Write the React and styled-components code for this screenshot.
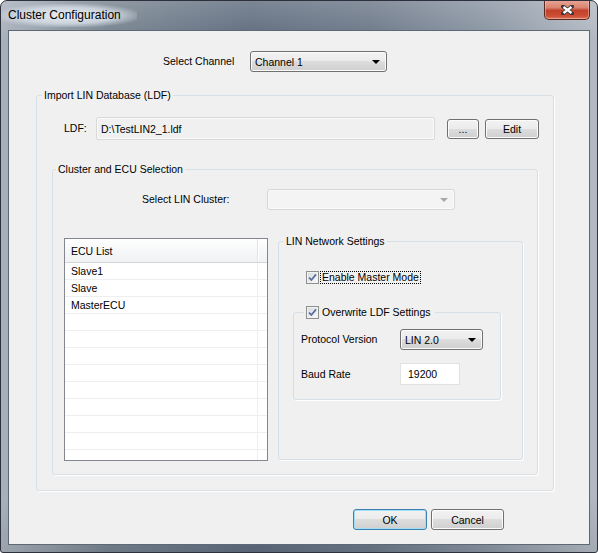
import React from "react";
import styled, { createGlobalStyle } from "styled-components";

const GlobalStyle = createGlobalStyle`
  html, body {
    margin: 0;
    padding: 0;
    background: #ffffff;
  }
  body {
    font-family: "Liberation Sans", Arial, sans-serif;
    font-size: 10.5px;
    color: #000;
  }
`;

const ecuNodes = ["Slave1", "Slave", "MasterECU"];
const emptyRows = 9;

const Window = styled.div`
  width: 598px;
  height: 553px;
  box-sizing: border-box;
  display: flex;
  flex-direction: column;
  padding: 0 7px 7px;
  border: 1px solid #2c313b;
  border-radius: 7px 7px 3px 3px;
  overflow: hidden;
  background: linear-gradient(
      180deg,
      rgba(255, 255, 255, 0.18) 0%,
      rgba(255, 255, 255, 0) 40px,
      rgba(0, 0, 0, 0) 90%,
      rgba(0, 0, 0, 0.08) 100%
    ),
    linear-gradient(
      90deg,
      #a9b1bc 0%,
      #76838f 18%,
      #5f6c7e 42%,
      #6c7888 62%,
      #8a95a3 82%,
      #b2b9c2 100%
    );
`;

const TitleBar = styled.div`
  height: 29px;
  display: flex;
  align-items: flex-start;
`;

const Title = styled.span`
  margin: 3px 0 0 -10px;
  padding: 3px 16px 4px 10px;
  font-family: "Liberation Sans", Arial, sans-serif;
  font-size: 12px;
  line-height: 16px;
  color: #000;
  background: radial-gradient(
    ellipse at center,
    rgba(236, 240, 245, 0.95) 0%,
    rgba(215, 222, 230, 0.8) 50%,
    rgba(200, 208, 218, 0) 78%
  );
`;

const CloseButton = styled.div`
  margin: -1px 0 0 auto;
  width: 46px;
  height: 20px;
  box-sizing: border-box;
  display: flex;
  align-items: center;
  justify-content: center;
  border: 1px solid #5a2a22;
  border-top: none;
  border-radius: 0 0 5px 5px;
  background: linear-gradient(
    180deg,
    #e9a898 0%,
    #d98470 40%,
    #c2412a 55%,
    #cc4f35 85%,
    #dd7a5e 100%
  );
  box-shadow: inset 0 0 0 1px rgba(255, 210, 200, 0.45);
`;

const Client = styled.div`
  flex: 1;
  display: flex;
  flex-direction: column;
  background: #f0f0f0;
  border: 1px solid #5e6977;
`;

const ChannelRow = styled.div`
  display: flex;
  align-items: center;
  margin-top: 20px;
  padding-left: 154px;
`;

const Label = styled.span`
  width: ${(p) => p.$w}px;
  flex: none;
  line-height: 13px;
  white-space: nowrap;
`;

const Combo = styled.div`
  width: ${(p) => p.$w}px;
  height: ${(p) => p.$h || 21}px;
  box-sizing: border-box;
  display: flex;
  align-items: center;
  justify-content: space-between;
  padding: 0 6px 0 4px;
  border: 1px solid ${(p) => (p.$disabled ? "#d6d6d6" : "#707070")};
  border-radius: 3px;
  background: ${(p) =>
    p.$disabled
      ? "#f4f4f4"
      : "linear-gradient(180deg, #f2f2f2 0%, #ebebeb 49%, #dddddd 50%, #cfcfcf 100%)"};
  box-shadow: inset 0 0 0 1px ${(p) => (p.$disabled ? "#fafafa" : "#fbfbfb")};
`;

const Arrow = styled.span`
  width: 0;
  height: 0;
  border-left: 4px solid transparent;
  border-right: 4px solid transparent;
  border-top: 4px solid ${(p) => (p.$disabled ? "#a8a8a8" : "#000")};
`;

const Group = styled.fieldset`
  margin: ${(p) => p.$m || "0"};
  padding: 0;
  min-width: 0;
  width: ${(p) => p.$w}px;
  height: ${(p) => p.$h}px;
  box-sizing: border-box;
  border: 1px solid #d5dfe5;
  border-radius: 3px;
  box-shadow: 1px 1px 0 #ffffff;
  display: flex;
  flex-direction: column;
  flex: none;
`;

const Legend = styled.legend`
  margin-left: ${(p) => p.$offset}px;
  padding: 0 2px;
  line-height: 13px;
  display: flex;
  align-items: center;
`;

const LdfRow = styled.div`
  display: flex;
  align-items: center;
  margin-top: 15px;
  padding-left: 27px;
`;

const ReadOnlyField = styled.div`
  width: 339px;
  height: 23px;
  box-sizing: border-box;
  display: flex;
  align-items: center;
  padding-left: 4px;
  border: 1px solid #d8d8d8;
  border-radius: 2px;
  background: #f0f0f0;
  box-shadow: inset 0 0 0 1px #fbfbfb;
`;

const Button = styled.button`
  width: ${(p) => p.$w}px;
  height: ${(p) => p.$h || 21}px;
  margin-left: ${(p) => p.$ml || 0}px;
  box-sizing: border-box;
  padding: 0;
  font-family: "Liberation Sans", Arial, sans-serif;
  font-size: 10.5px;
  color: #000;
  border: 1px solid ${(p) => (p.$primary ? "#3c7fb1" : "#707070")};
  border-radius: 3px;
  background: linear-gradient(
    180deg,
    #f2f2f2 0%,
    #ebebeb 49%,
    #dddddd 50%,
    #cfcfcf 100%
  );
  box-shadow: inset 0 0 0 1px ${(p) => (p.$primary ? "#9fdff8" : "#fcfcfc")};
`;

const ClusterRow = styled.div`
  display: flex;
  align-items: center;
  margin-top: 13px;
  padding-left: 89px;
`;

const LowerRow = styled.div`
  display: flex;
  align-items: flex-start;
  gap: 10px;
  margin-top: 25px;
  padding-left: 11px;
`;

const ListBox = styled.div`
  width: 204px;
  height: 223px;
  margin-top: 3px;
  box-sizing: border-box;
  border: 1px solid #828790;
  background: #ffffff;
  overflow: hidden;
`;

const ListHeader = styled.div`
  height: 24px;
  box-sizing: border-box;
  display: grid;
  grid-template-columns: 193px 1fr;
  border-bottom: 1px solid #d5d5d5;
  background: linear-gradient(180deg, #ffffff 0%, #f7f8f9 45%, #f1f2f4 100%);
`;

const HeaderCell = styled.div`
  display: flex;
  align-items: center;
  padding-left: 6px;
  border-right: 1px solid #e3e4e6;
  box-shadow: 1px 0 0 #ffffff;
`;

const ListRow = styled.div`
  height: 17px;
  box-sizing: border-box;
  display: grid;
  grid-template-columns: 193px 1fr;
  border-bottom: 1px solid #eeeeee;
`;

const Cell = styled.div`
  display: flex;
  align-items: center;
  padding-left: 6px;
  border-right: 1px solid #eeeeee;
`;

const CheckRow = styled.div`
  display: flex;
  align-items: center;
  margin-top: 23px;
  padding-left: 27px;
`;

const CheckBox = styled.span`
  width: 13px;
  height: 13px;
  box-sizing: border-box;
  flex: none;
  display: flex;
  align-items: center;
  justify-content: center;
  border: 1px solid #8e8f8f;
  background: linear-gradient(135deg, #d3d7dc 0%, #eceef0 60%, #fafafa 100%);
  box-shadow: inset 0 0 0 1px #f2f2f2;
`;

const CheckLabel = styled.span`
  margin-left: 1px;
  padding: 0 1px;
  line-height: 11px;
  border: 1px dotted ${(p) => (p.$focus ? "#000" : "transparent")};
`;

const SettingRow = styled.div`
  display: flex;
  align-items: center;
  margin-top: ${(p) => p.$mt}px;
  padding-left: 7px;
`;

const TextInput = styled.div`
  width: 60px;
  height: 22px;
  box-sizing: border-box;
  display: flex;
  align-items: center;
  padding-left: 7px;
  border: 1px solid #e2e2e2;
  background: #ffffff;
`;

const ButtonRow = styled.div`
  display: flex;
  align-items: center;
  margin-top: 18px;
  padding-left: 344px;
`;

const Check = () => (
  <CheckBox>
    <svg width="9" height="9" viewBox="0 0 9 9">
      <path
        d="M1 4.6 L3.4 7 L8 1.4"
        fill="none"
        stroke="#5a6ea2"
        strokeWidth="1.8"
      />
    </svg>
  </CheckBox>
);

const App = () => {
  return (
    <>
      <GlobalStyle />
      <Window>
        <TitleBar>
          <Title>Cluster Configuration</Title>
          <CloseButton>
            <svg width="13" height="10" viewBox="0 0 13 10">
              <path
                d="M2 1.5 L11 8.5 M11 1.5 L2 8.5"
                stroke="#3a3a3a"
                strokeWidth="4"
                strokeLinecap="square"
              />
              <path
                d="M2.5 2 L10.5 8 M10.5 2 L2.5 8"
                stroke="#ffffff"
                strokeWidth="2.2"
              />
            </svg>
          </CloseButton>
        </TitleBar>

        <Client>
          <ChannelRow>
            <Label $w={87}>Select Channel</Label>
            <Combo $w={137}>
              <span>Channel 1</span>
              <Arrow />
            </Combo>
          </ChannelRow>

          <Group $m="17px 0 0 27px" $w={518} $h={402}>
            <Legend $offset={5}>Import LIN Database (LDF)</Legend>

            <LdfRow>
              <Label $w={32}>LDF:</Label>
              <ReadOnlyField>D:\TestLIN2_1.ldf</ReadOnlyField>
              <Button $w={32} $h={20} $ml={12}>
                ...
              </Button>
              <Button $w={54} $h={20} $ml={6}>
                Edit
              </Button>
            </LdfRow>

            <Group $m="23px 0 0 15px" $w={486} $h={312}>
              <Legend $offset={3}>Cluster and ECU Selection</Legend>

              <ClusterRow>
                <Label $w={125}>Select LIN Cluster:</Label>
                <Combo $w={188} $disabled>
                  <span />
                  <Arrow $disabled />
                </Combo>
              </ClusterRow>

              <LowerRow>
                <ListBox>
                  <ListHeader>
                    <HeaderCell>ECU List</HeaderCell>
                  </ListHeader>
                  {ecuNodes.map((name) => (
                    <ListRow key={name}>
                      <Cell>{name}</Cell>
                    </ListRow>
                  ))}
                  {Array.from({ length: emptyRows }).map((_, i) => (
                    <ListRow key={"e" + i}>
                      <Cell />
                    </ListRow>
                  ))}
                </ListBox>

                <Group $w={245} $h={225}>
                  <Legend $offset={5}>LIN Network Settings</Legend>

                  <CheckRow>
                    <Check />
                    <CheckLabel $focus>Enable Master Mode</CheckLabel>
                  </CheckRow>

                  <Group $m="22px 0 0 14px" $w={208} $h={94}>
                    <Legend $offset={10}>
                      <Check />
                      <CheckLabel>Overwrite LDF Settings</CheckLabel>
                    </Legend>

                    <SettingRow $mt={10}>
                      <Label $w={99}>Protocol Version</Label>
                      <Combo $w={83}>
                        <span>LIN 2.0</span>
                        <Arrow />
                      </Combo>
                    </SettingRow>

                    <SettingRow $mt={13}>
                      <Label $w={99}>Baud Rate</Label>
                      <TextInput>19200</TextInput>
                    </SettingRow>
                  </Group>
                </Group>
              </LowerRow>
            </Group>
          </Group>

          <ButtonRow>
            <Button $w={74} $primary>
              OK
            </Button>
            <Button $w={73} $ml={4}>
              Cancel
            </Button>
          </ButtonRow>
        </Client>
      </Window>
    </>
  );
};

export default App;
